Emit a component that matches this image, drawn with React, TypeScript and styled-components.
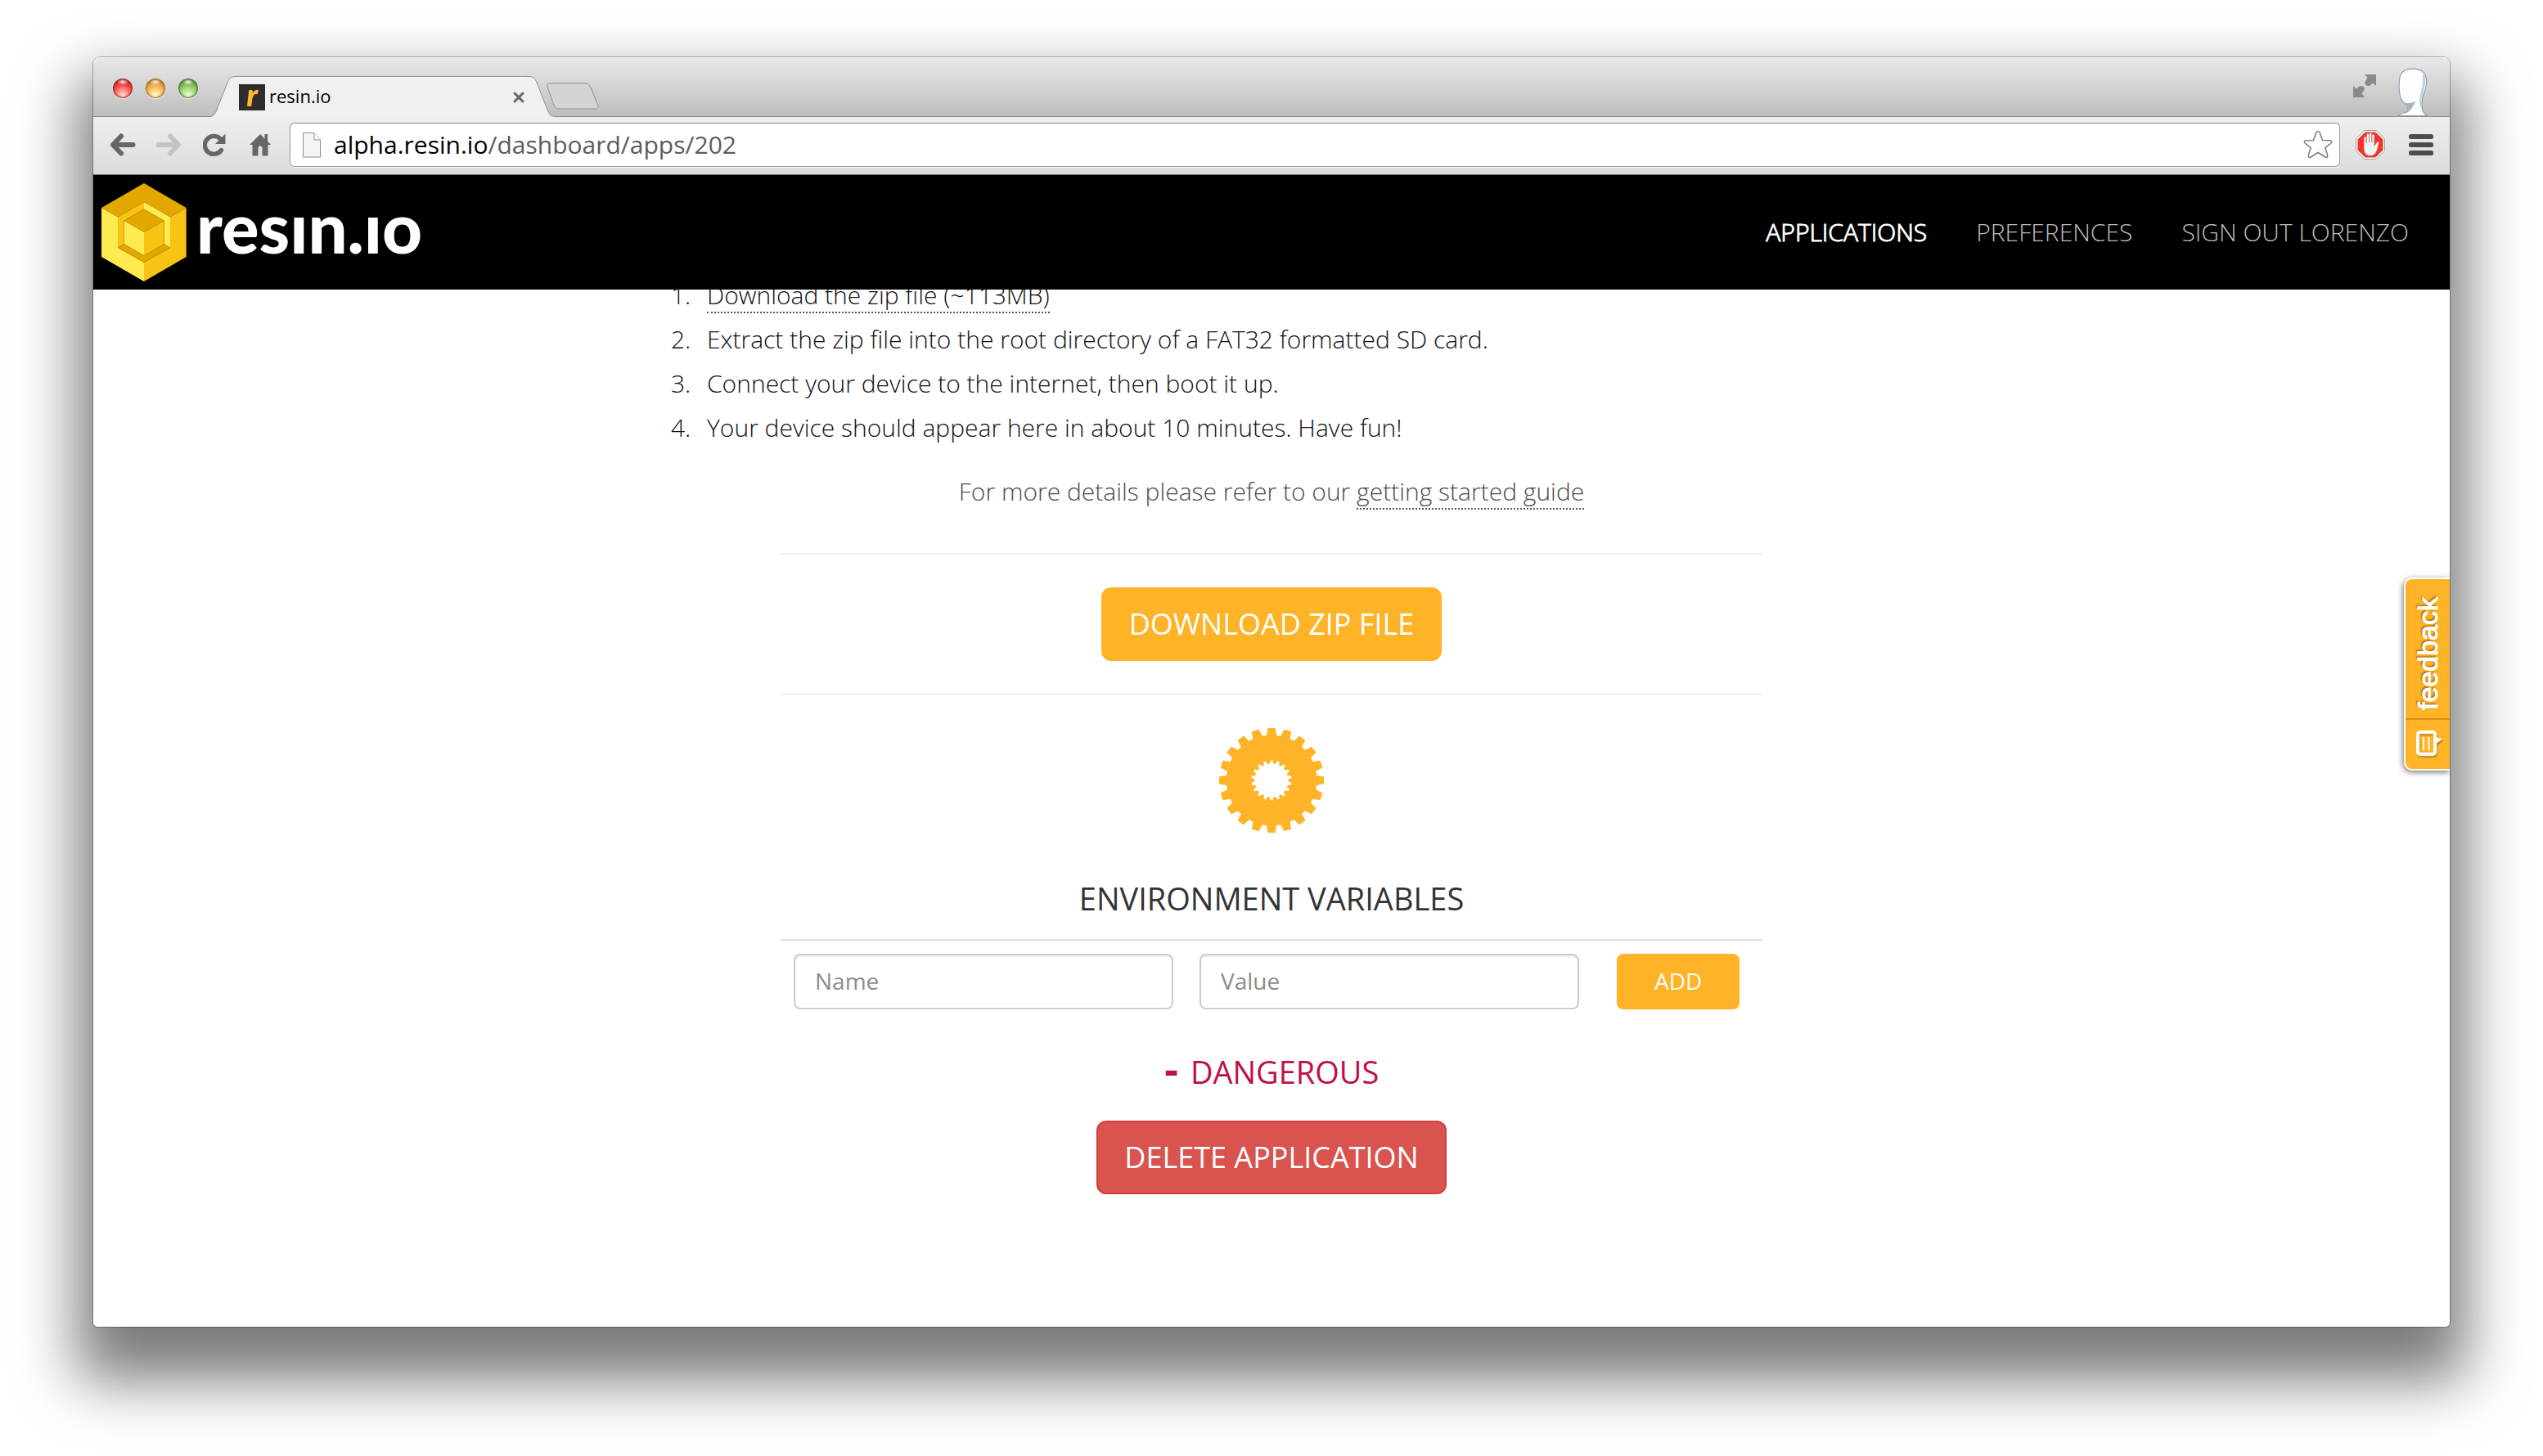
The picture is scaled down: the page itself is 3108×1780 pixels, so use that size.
import React from "react";
import styled, { createGlobalStyle, css } from "styled-components";

const sans = `"Open Sans", "Noto Sans", sans-serif`;
const orange = "#ffb326";

const GlobalStyle = createGlobalStyle`
  * { box-sizing: border-box; }
  body { margin: 0; background: #fff; font-family: ${sans}; }
  button { font: inherit; cursor: pointer; }
`;

/* ---------- desktop and window ---------- */

const Desktop = styled.div`
  display: flex;
  min-height: 100vh;
  padding: 70px 114px 158px;
  background: #fff;
  overflow: hidden;
`;

const Window = styled.div`
  position: relative;
  display: flex;
  flex: 1;
  flex-direction: column;
  min-width: 0;
  border-radius: 8px 8px 5px 5px;
  background: #fff;
  box-shadow:
    0 0 0 1px rgba(0, 0, 0, 0.28),
    0 46px 72px 20px rgba(0, 0, 0, 0.52);
`;

const TabStrip = styled.div`
  display: flex;
  align-items: flex-end;
  height: 73px;
  padding: 0 26px 0 24px;
  border-radius: 8px 8px 0 0;
  background: linear-gradient(#e9e9e9, #bdbdbd);
  box-shadow: inset 0 -1px 0 #8e8e8e, inset 0 1px 0 #f4f4f4;
`;

const Lights = styled.div`
  display: flex;
  align-self: flex-start;
  gap: 16px;
  padding-top: 26px;
  margin-right: 14px;
`;

const Light = styled.button<{ $rim: string; $mid: string; $glow: string }>`
  width: 24px;
  height: 24px;
  padding: 0;
  border: 0;
  border-radius: 50%;
  background:
    radial-gradient(ellipse 7px 4px at 50% 4px, rgba(255, 255, 255, 0.9), rgba(255, 255, 255, 0) 100%),
    radial-gradient(circle at 50% 85%, ${(p) => p.$glow} 5%, ${(p) => p.$mid} 55%, ${(p) => p.$rim} 100%);
  box-shadow: inset 0 0 2px 1px ${(p) => p.$rim}, 0 1px 1px rgba(255, 255, 255, 0.7);
`;

const Tab = styled.div`
  display: flex;
  height: 50px;
`;

const TabEdge = styled.svg`
  display: block;
  width: 36px;
  height: 50px;
`;

const TabBody = styled.div`
  display: flex;
  align-items: center;
  width: 350px;
  border-top: 1px solid #8e8e8e;
  background: #f0f0f0;
  box-shadow: inset 0 1px 0 #fafafa;
`;

const Favicon = styled.span`
  display: flex;
  align-items: center;
  justify-content: center;
  width: 32px;
  height: 32px;
  background: #2d2d2d;
  color: #fdbb30;
  font: italic 900 38px/26px Lato, sans-serif;
  padding-bottom: 8px;
`;

const TabTitle = styled.span`
  flex: 1;
  padding: 0 0 4px 5px;
  color: #000;
  font-size: 22px;
  line-height: 32px;
`;

const PlainButton = styled.button`
  display: flex;
  align-items: center;
  justify-content: center;
  padding: 0;
  border: 0;
  background: none;
`;

const CloseTab = styled(PlainButton)`
  width: 14px;
  height: 32px;
  margin-right: 1px;
`;

const NewTab = styled(PlainButton)`
  align-self: flex-start;
  padding-top: 31px;
  margin-left: -11px;
`;

const StripEnd = styled.div`
  display: flex;
  align-self: stretch;
  margin-left: auto;
  gap: 26px;
`;

const FullScreen = styled(PlainButton)`
  align-self: flex-start;
  padding-top: 21px;
`;

const Avatar = styled(PlainButton)`
  align-items: flex-end;
  padding-bottom: 1px;
`;

const Toolbar = styled.div`
  display: flex;
  align-items: flex-start;
  height: 71px;
  padding: 7px 4px 0 8px;
  border-bottom: 1px solid #6f6f6f;
  background: linear-gradient(#efefef, #dbdbdb);
`;

const ToolButton = styled(PlainButton)<{ $wide?: boolean }>`
  width: ${(p) => (p.$wide ? 62 : 56)}px;
  height: 54px;
`;

const Omnibox = styled.div`
  display: flex;
  flex: 1;
  align-items: center;
  gap: 16px;
  height: 54px;
  padding: 0 8px 0 15px;
  margin: 0 6px 0 8px;
  border: 1px solid #9b9b9b;
  border-top-color: #888;
  border-radius: 6px;
  background: #fff;
  box-shadow: 0 1px 0 #f6f6f6;
`;

const Address = styled.span`
  flex: 1;
  color: #5c5c5c;
  font-size: 30px;
  line-height: 44px;
  b { color: #000; font-weight: 400; }
`;

/* ---------- site ---------- */

const NavBar = styled.header`
  position: relative;
  z-index: 1;
  display: flex;
  align-items: center;
  justify-content: space-between;
  height: 140px;
  padding: 0 50px 0 10px;
  background: #000;
`;

const Brand = styled.a`
  display: flex;
  align-items: center;
  gap: 12px;
  color: #fff;
  text-decoration: none;
`;

const BrandName = styled.span`
  padding-bottom: 14px;
  font: 900 85px/100px Lato, sans-serif;
`;

const Links = styled.nav`
  display: flex;
  gap: 60px;
`;

const NavLink = styled.a<{ $active?: boolean }>`
  color: ${(p) => (p.$active ? "#fff" : "#bdbdbd")};
  font-size: 30px;
  font-weight: 300;
  line-height: 40px;
  text-decoration: none;
  -webkit-text-stroke: ${(p) => (p.$active ? "1px #fff" : "0")};
`;

const Viewport = styled.main`
  display: flex;
  flex: 1;
  flex-direction: column;
  align-items: center;
  overflow: hidden;
  border-radius: 0 0 5px 5px;
  color: #333;
`;

const Steps = styled.ol`
  width: 100%;
  max-width: 1500px;
  padding: 0 0 0 48px;
  margin: -20px 0 24px;
  color: #111;
  font-size: 30px;
  font-weight: 300;
  line-height: 54px;
  li { padding-left: 12px; }
`;

const DottedLink = styled.a`
  color: inherit;
  border-bottom: 2px dotted #555;
  text-decoration: none;
`;

const Hint = styled.p`
  margin: 0 0 48px;
  color: #4c4c4c;
  font-size: 30px;
  font-weight: 300;
  line-height: 54px;
`;

const Section = styled.section<{ $ruled?: boolean }>`
  display: flex;
  flex-direction: column;
  align-items: center;
  width: 100%;
  max-width: 1200px;
  ${(p) =>
    p.$ruled &&
    css`
      padding: 40px 0;
      border-top: 2px solid #eee;
      border-bottom: 2px solid #eee;
      margin-bottom: 40px;
    `}
`;

const Button = styled.button<{ $kind?: "danger"; $small?: boolean }>`
  height: ${(p) => (p.$small ? 68 : 90)}px;
  padding: ${(p) => (p.$small ? "0 44px 2px" : "0 32px")};
  border: 2px solid ${(p) => (p.$kind === "danger" ? "#d43f3a" : orange)};
  border-radius: ${(p) => (p.$small ? 8 : 12)}px;
  background: ${(p) => (p.$kind === "danger" ? "#d9534f" : orange)};
  color: #fff;
  font-size: ${(p) => (p.$small ? 28 : 36)}px;
  line-height: 48px;
`;

const Heading = styled.h2<{ $danger?: boolean }>`
  display: flex;
  align-items: baseline;
  gap: 14px;
  height: 52px;
  margin: ${(p) => (p.$danger ? "50px 0 34px" : "54px 0 24px")};
  color: ${(p) => (p.$danger ? "#c10f45" : "#333")};
  font-size: 38px;
  font-weight: 400;
  line-height: 52px;
`;

const CollapseSign = styled.span`
  font: 700 44px/52px "DejaVu Sans", sans-serif;
`;

const VariableForm = styled.form`
  display: flex;
  width: 100%;
  gap: 32px;
  padding: 16px 28px 0 16px;
  border-top: 2px solid #ddd;
`;

const Field = styled.input`
  flex: 1;
  min-width: 0;
  height: 68px;
  padding: 0 24px 2px;
  border: 2px solid #ccc;
  border-radius: 8px;
  background: #fff;
  box-shadow: inset 0 2px 2px rgba(0, 0, 0, 0.075);
  color: #555;
  font: 400 28px/40px ${sans};
  &::placeholder { color: #8c8c8c; opacity: 1; }
`;

const AddSlot = styled.div`
  display: flex;
  flex-direction: column;
  width: 164px;
  padding-left: 14px;
`;

const Feedback = styled.button`
  position: absolute;
  top: 636px;
  right: 0;
  display: flex;
  flex-direction: column;
  align-items: center;
  width: 56px;
  height: 236px;
  padding: 0;
  border: 2px solid #fff;
  border-right: 0;
  border-radius: 10px 0 0 10px;
  background: ${orange};
  box-shadow: -1px 2px 7px rgba(0, 0, 0, 0.55);
  clip-path: inset(-12px 0 -12px -12px);
  color: #fff;
`;

const FeedbackLabel = styled.span`
  display: flex;
  flex: 1;
  align-items: center;
  justify-content: center;
  width: 100%;
  padding-bottom: 12px;
  border-top: 2px solid #d98f14;
  font: 400 34px/48px "Liberation Sans", sans-serif;
  text-shadow: 2px -2px 2px rgba(120, 70, 0, 0.6);
  -webkit-text-stroke: 1px #fff;
  writing-mode: vertical-rl;
  transform: rotate(180deg);
`;

const FeedbackIcon = styled.span`
  display: flex;
  align-items: center;
  justify-content: center;
  height: 60px;
  padding-left: 6px;
`;

/* ---------- drawings ---------- */

const ring = (teeth: number, root: number, tip: number, baseHalf: number, tipHalf: number) => {
  const pts: string[] = [];
  for (let i = 0; i < teeth; i++) {
    const a = (i * 2 * Math.PI) / teeth;
    const at = (r: number, side: number) =>
      `${(64 + r * Math.sin(a) + side * Math.cos(a)).toFixed(2)} ${(64 - r * Math.cos(a) + side * Math.sin(a)).toFixed(2)}`;
    pts.push(at(root, -baseHalf), at(tip, -tipHalf), at(tip, tipHalf), at(root, baseHalf));
  }
  return `M${pts.join("L")}Z`;
};

const Gear = () => (
  <svg width="128" height="128" viewBox="0 0 128 128" aria-hidden="true">
    <path fillRule="evenodd" fill={orange} d={ring(20, 55, 64, 6, 4.6) + ring(18, 20.5, 24.5, 2.2, 1.4)} />
  </svg>
);

const Cube = () => (
  <svg width="104" height="120" viewBox="72 57 312 360" aria-hidden="true">
    <path fill="#e2a800" d="M228 57L383 147L324 181L228 126L132 181L72 147Z" />
    <path fill="#ffea50" d="M72 147L132 181V293L228 347V417L72 327Z" />
    <path fill="#f8c312" d="M383 147L324 181V293L228 347V417L383 327Z" />
    <path fill="#f8c312" d="M228 126L132 181V293L155 280V194L228 152Z" />
    <path fill="#ffea50" d="M228 126L324 181V293L302 280V194L228 152Z" />
    <path fill="#e2a800" d="M132 293L228 347L324 293L302 280L228 322L155 280Z" />
    <path fill="#e2a800" d="M228 152L302 194L228 236L155 194Z" />
    <path fill="#ffea50" d="M155 194L228 236V322L155 280Z" />
    <path fill="#f8c312" d="M302 194L228 236V322L302 280Z" />
  </svg>
);

const LeftEdge = () => (
  <TabEdge viewBox="0 0 36 50" aria-hidden="true">
    <path d="M0 49.5C6 49 7 46 9 41L22 8C24 3 26 .5 32 .5H36V50H0Z" fill="#f0f0f0" />
    <path d="M0 49.5C6 49 7 46 9 41L22 8C24 3 26 .5 32 .5H36" fill="none" stroke="#8e8e8e" />
  </TabEdge>
);

const RightEdge = () => (
  <TabEdge viewBox="0 0 36 50" aria-hidden="true">
    <path d="M36 49.5C30 49 29 46 27 41L14 8C12 3 10 .5 4 .5H0V50H36Z" fill="#f0f0f0" />
    <path d="M36 49.5C30 49 29 46 27 41L14 8C12 3 10 .5 4 .5H0" fill="none" stroke="#8e8e8e" />
  </TabEdge>
);

const Arrow = ({ flip, color }: { flip?: boolean; color: string }) => (
  <svg width="32" height="28" viewBox="0 0 32 28" aria-hidden="true">
    <path
      d="M14 3.5L4 14L14 24.5M5 14H28.5"
      transform={flip ? "translate(32 0) scale(-1 1)" : undefined}
      fill="none"
      stroke={color}
      strokeWidth="6"
      strokeLinecap="round"
      strokeLinejoin="round"
    />
  </svg>
);

const Reload = () => (
  <svg width="28" height="28" viewBox="0 0 28 28" aria-hidden="true">
    <path d="M22.5 20.5A11 11 0 1 1 20.5 6" fill="none" stroke="#666" strokeWidth="5.4" strokeLinecap="round" />
    <path d="M27.5 .5V13H15Z" fill="#666" />
  </svg>
);

const Home = () => (
  <svg width="26" height="28" viewBox="0 0 26 28" aria-hidden="true">
    <path d="M13 1L18.5 6.5V1H22V9.5L26 14H22.5V27.5H15.5V18A2.5 2.5 0 0 0 10.5 18V27.5H3.5V14H0Z" fill="#666" />
  </svg>
);

const PageIcon = () => (
  <svg width="22" height="31" viewBox="0 0 22 31" aria-hidden="true">
    <path d="M.5 .5H14L21.5 9V30H.5Z" fill="#f4f4f4" stroke="#8c8c8c" />
    <path d="M14 .5V9H21.5" fill="#fff" stroke="#8c8c8c" />
  </svg>
);

const Star = () => (
  <svg width="36" height="36" viewBox="0 0 36 36" aria-hidden="true">
    <path
      d="M18 1.5C19.3 1.5 20 2.5 20.5 4L23.5 12.5L32.5 12.7C35.3 12.8 35.5 14.8 33.5 16.3L26.8 21.5L29.6 30.5C30.3 33.3 28.8 34.3 26.5 32.7L18 27.5L9.5 32.7C7.2 34.3 5.7 33.3 6.4 30.5L9.2 21.5L2.5 16.3C.5 14.8 .7 12.8 3.5 12.7L12.5 12.5L15.5 4C16 2.5 16.7 1.5 18 1.5Z"
      fill="#fff"
      stroke="#808080"
      strokeWidth="1.6"
    />
  </svg>
);

const BlockIcon = () => (
  <svg width="36" height="36" viewBox="0 0 36 36" aria-hidden="true">
    <path d="M10.8 .5H25.2L35.5 10.8V25.2L25.2 35.5H10.8L.5 25.2V10.8Z" fill="#fff" stroke="#9b9b9b" />
    <path d="M11.6 2.5H24.4L33.5 11.6V24.4L24.4 33.5H11.6L2.5 24.4V11.6Z" fill="#f2352c" />
    <path
      d="M10 21V9.5A1.6 1.6 0 0 1 13.2 9.5V16V6A1.6 1.6 0 0 1 16.5 6V15V5A1.6 1.6 0 0 1 19.8 5V15V6.5A1.6 1.6 0 0 1 23 6.5V19C24.5 18 25 14.5 27 14.3C28.6 14.2 29.3 15.3 28.5 16.8C26.5 20.5 26.8 31 18.5 31.5C11.5 31.5 10 27 10 21Z"
      fill="#f3f3f3"
      stroke="#b5554f"
      strokeWidth=".6"
    />
  </svg>
);

const Menu = () => (
  <svg width="30" height="26" viewBox="0 0 30 26" fill="#4c4c4c" aria-hidden="true">
    <rect width="30" height="6" rx="2.5" />
    <rect y="10" width="30" height="6" rx="2.5" />
    <rect y="20" width="30" height="6" rx="2.5" />
  </svg>
);

const Expand = () => (
  <svg width="28" height="28" viewBox="0 0 28 28" fill="#8a8a8a" aria-hidden="true">
    <path d="M14 0H28V14L24 10.5L20 14C17 14.5 14 13 14 10L17.5 4Z" />
    <path d="M14 28H0V14L4 17.5L8 14C11 13.5 14 15 14 18L10.5 23.5Z" />
  </svg>
);

const Silhouette = () => (
  <svg width="38" height="59" viewBox="0 0 38 59" aria-hidden="true">
    <path
      d="M1 58.5C4 55 12 55 13 53V46C6 43 3 38 2.5 29C1 11 3 1.5 18 1.2C33 1 36.5 9 35.5 20C35 29 30 33 30 43C30 51 31 55 36 58.5Z"
      fill="#fbfdff"
      stroke="#8fa0b1"
      strokeWidth="1.2"
    />
    <path d="M34.5 12C34.8 27 29.5 31 29.3 44L29.6 51C26 44 26.5 37 29 29C31 22 31.5 16 30.5 7C33 8.5 34.3 10 34.5 12Z" fill="#c3d1dc" />
    <path d="M9 42.5C13 44 17 43 22 41C20 46 17 50 14 54L13 46Z" fill="#a3b4c2" />
  </svg>
);

const NewTabShape = () => (
  <svg width="66" height="33" viewBox="0 0 66 33" aria-hidden="true">
    <path d="M5 .8H48C51 .8 53 2 54.5 5L63.5 27C64.5 30.5 64 32 60.5 32H17C13.5 32 11.5 31 10 27.5L2 5C1 2 2 .8 5 .8Z" fill="#d4d4d4" stroke="#8e8e8e" />
  </svg>
);

const Note = () => (
  <svg width="34" height="34" viewBox="0 0 34 34" aria-hidden="true">
    <path d="M24 9L33.5 12.5L24 20Z" fill="#a86f10" opacity=".6" />
    <rect x="3" y="4.5" width="21" height="27" rx="3" fill="none" stroke="#a86f10" strokeWidth="4" opacity=".5" />
    <path d="M23 8L32 10.5L23 17Z" fill="#fff" />
    <rect x="2" y="2" width="21" height="27" rx="3" fill="none" stroke="#fff" strokeWidth="4" />
    <path d="M9 8V24M15.5 8V24" stroke="#fff" strokeWidth="2" />
  </svg>
);

/* ---------- page ---------- */

export default function App() {
  return (
    <Desktop>
      <GlobalStyle />
      <Window>
        <TabStrip>
          <Lights>
            <Light aria-label="Close" $rim="#8c1a1c" $mid="#f6403d" $glow="#ffd0cc" />
            <Light aria-label="Minimize" $rim="#94591a" $mid="#f3a945" $glow="#fff6b8" />
            <Light aria-label="Zoom" $rim="#376424" $mid="#84c45c" $glow="#e6fad0" />
          </Lights>
          <Tab>
            <LeftEdge />
            <TabBody>
              <Favicon>r</Favicon>
              <TabTitle>resin.io</TabTitle>
              <CloseTab aria-label="Close tab">
                <svg width="14" height="14" viewBox="0 0 14 14" aria-hidden="true">
                  <path d="M2 2L12 12M12 2L2 12" stroke="#686868" strokeWidth="3" strokeLinecap="round" />
                </svg>
              </CloseTab>
            </TabBody>
            <RightEdge />
          </Tab>
          <NewTab aria-label="New tab">
            <NewTabShape />
          </NewTab>
          <StripEnd>
            <FullScreen aria-label="Full screen">
              <Expand />
            </FullScreen>
            <Avatar aria-label="Profile">
              <Silhouette />
            </Avatar>
          </StripEnd>
        </TabStrip>
        <Toolbar>
          <ToolButton aria-label="Back"><Arrow color="#666" /></ToolButton>
          <ToolButton aria-label="Forward"><Arrow flip color="#c3c3c3" /></ToolButton>
          <ToolButton aria-label="Reload"><Reload /></ToolButton>
          <ToolButton aria-label="Home"><Home /></ToolButton>
          <Omnibox>
            <PageIcon />
            <Address><b>alpha.resin.io</b>/dashboard/apps/202</Address>
            <PlainButton aria-label="Bookmark"><Star /></PlainButton>
          </Omnibox>
          <ToolButton $wide aria-label="Ad blocker"><BlockIcon /></ToolButton>
          <ToolButton $wide aria-label="Menu"><Menu /></ToolButton>
        </Toolbar>
        <NavBar>
          <Brand href="#home">
            <Cube />
            <BrandName>resın.ıo</BrandName>
          </Brand>
          <Links>
            <NavLink $active href="#applications">APPLICATIONS</NavLink>
            <NavLink href="#preferences">PREFERENCES</NavLink>
            <NavLink href="#signout">SIGN OUT LORENZO</NavLink>
          </Links>
        </NavBar>
        <Viewport>
          <Steps>
            <li><DottedLink href="#zip">Download the zip file (~113MB)</DottedLink></li>
            <li>Extract the zip file into the root directory of a FAT32 formatted SD card.</li>
            <li>Connect your device to the internet, then boot it up.</li>
            <li>Your device should appear here in about 10 minutes. Have fun!</li>
          </Steps>
          <Hint>
            For more details please refer to our <DottedLink href="#guide">getting started guide</DottedLink>
          </Hint>
          <Section $ruled>
            <Button type="button">DOWNLOAD ZIP FILE</Button>
          </Section>
          <Section>
            <Gear />
            <Heading>ENVIRONMENT VARIABLES</Heading>
            <VariableForm onSubmit={(e) => e.preventDefault()}>
              <Field aria-label="Name" placeholder="Name" />
              <Field aria-label="Value" placeholder="Value" />
              <AddSlot>
                <Button $small type="submit">ADD</Button>
              </AddSlot>
            </VariableForm>
          </Section>
          <Section>
            <Heading $danger><CollapseSign>-</CollapseSign><span>DANGEROUS</span></Heading>
            <Button $kind="danger" type="button">DELETE APPLICATION</Button>
          </Section>
        </Viewport>
        <Feedback type="button">
          <FeedbackLabel>feedback</FeedbackLabel>
          <FeedbackIcon><Note /></FeedbackIcon>
        </Feedback>
      </Window>
    </Desktop>
  );
}
